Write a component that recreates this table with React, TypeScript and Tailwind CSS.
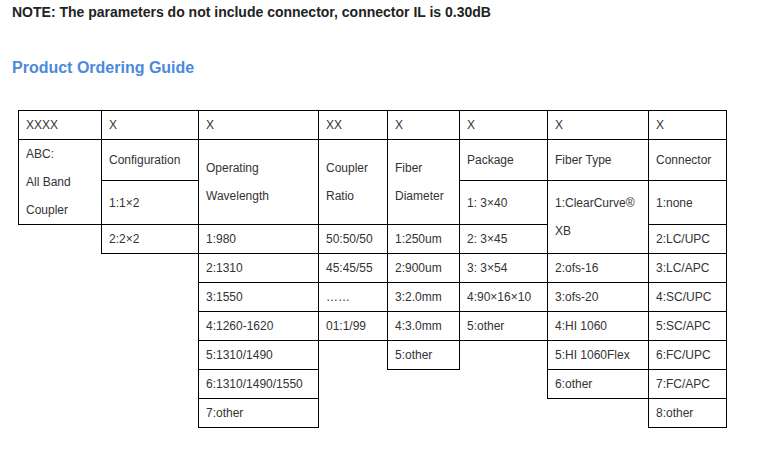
import React from 'react';

type Cell = { t: string; h: number };
type Col = { w: number; cells: Cell[] };

const row = (t: string): Cell => ({ t, h: 30 });

const columns: Col[] = [
  { w: 84, cells: [row('XXXX'), { t: 'ABC:\nAll Band\nCoupler', h: 86 }] },
  { w: 98, cells: [row('X'), { t: 'Configuration', h: 42 }, { t: '1:1×2', h: 45 }, row('2:2×2')] },
  {
    w: 121,
    cells: [
      row('X'),
      { t: 'Operating\nWavelength', h: 86 },
      row('1:980'),
      row('2:1310'),
      row('3:1550'),
      row('4:1260-1620'),
      row('5:1310/1490'),
      row('6:1310/1490/1550'),
      row('7:other'),
    ],
  },
  {
    w: 70,
    cells: [row('XX'), { t: 'Coupler\nRatio', h: 86 }, row('50:50/50'), row('45:45/55'), row('……'), row('01:1/99')],
  },
  {
    w: 73,
    cells: [
      row('X'),
      { t: 'Fiber\nDiameter', h: 86 },
      row('1:250um'),
      row('2:900um'),
      row('3:2.0mm'),
      row('4:3.0mm'),
      row('5:other'),
    ],
  },
  {
    w: 89,
    cells: [
      row('X'),
      { t: 'Package', h: 42 },
      { t: '1: 3×40', h: 45 },
      row('2: 3×45'),
      row('3: 3×54'),
      row('4:90×16×10'),
      row('5:other'),
    ],
  },
  {
    w: 102,
    cells: [
      row('X'),
      { t: 'Fiber Type', h: 42 },
      { t: '1:ClearCurve®\nXB', h: 74 },
      row('2:ofs-16'),
      row('3:ofs-20'),
      row('4:HI 1060'),
      row('5:HI 1060Flex'),
      row('6:other'),
    ],
  },
  {
    w: 79,
    cells: [
      row('X'),
      { t: 'Connector', h: 42 },
      { t: '1:none', h: 45 },
      row('2:LC/UPC'),
      row('3:LC/APC'),
      row('4:SC/UPC'),
      row('5:SC/APC'),
      row('6:FC/UPC'),
      row('7:FC/APC'),
      row('8:other'),
    ],
  },
];

const App: React.FC = () => {
  return (
    <div className="w-[784px] h-[465px] bg-white overflow-hidden font-['Liberation_Sans',Arial,sans-serif]">
      <p className="pl-[12px] pt-[4px] text-[14px] leading-[16px] font-bold text-[#222]">
        NOTE: The parameters do not include connector, connector IL is 0.30dB
      </p>
      <h2 className="pl-[12px] mt-[39px] text-[16px] leading-[18px] font-bold text-[#4b89dc]">
        Product Ordering Guide
      </h2>

      {/* Ordering table */}
      <div className="flex items-start ml-[18px] mt-[33px]">
        {columns.map((col, i) => (
          <div
            key={i}
            className={`flex flex-col shrink-0 ${i > 0 ? '-ml-px' : ''}`}
            style={{ width: col.w }}
          >
            {col.cells.map((c, j) => (
              <div
                key={j}
                className={`flex items-center border border-black pl-[7px] text-[12px] leading-[28px] text-[#333] whitespace-pre-line ${j > 0 ? '-mt-px' : ''}`}
                style={{ height: c.h }}
              >
                {c.t}
              </div>
            ))}
          </div>
        ))}
      </div>
    </div>
  );
};

export default App;
